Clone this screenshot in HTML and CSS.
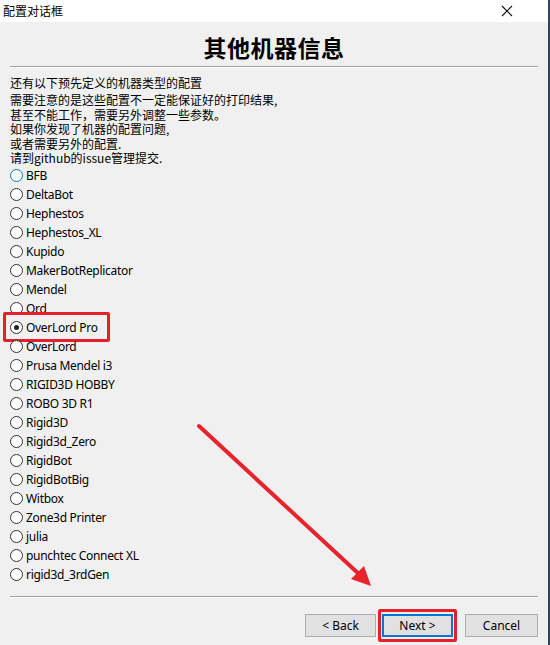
FILE: index.html
```html
<!DOCTYPE html>
<html lang="zh-CN">
<head>
    <meta charset="UTF-8" />
    <title>配置对话框</title>
    <link rel="stylesheet" href="styles.css">
</head>
<body>
    <div class="window">
        <div class="titlebar">
            <span class="caption">配置对话框</span>
            <svg class="close" width="12" height="12" viewBox="0 0 12 12">
                <path d="M1 1 L11 11 M11 1 L1 11" stroke="#111" stroke-width="1.1" fill="none" />
            </svg>
        </div>

        <div class="content">
            <h1 class="heading">其他机器信息</h1>
            <div class="rule"></div>

            <p class="intro">还有以下预先定义的机器类型的配置</p>
            <p class="note">需要注意的是这些配置不一定能保证好的打印结果,<br>
                甚至不能工作，需要另外调整一些参数。<br>
                如果你发现了机器的配置问题,<br>
                或者需要另外的配置.<br>
                请到github的issue管理提交.</p>

            <ul class="machines">
                <li class="machine hover"><span class="radio"></span>BFB</li>
                <li class="machine"><span class="radio"></span>DeltaBot</li>
                <li class="machine"><span class="radio"></span>Hephestos</li>
                <li class="machine"><span class="radio"></span>Hephestos_XL</li>
                <li class="machine"><span class="radio"></span>Kupido</li>
                <li class="machine"><span class="radio"></span>MakerBotReplicator</li>
                <li class="machine"><span class="radio"></span>Mendel</li>
                <li class="machine"><span class="radio"></span>Ord</li>
                <li class="machine checked marked"><span class="radio"></span>OverLord Pro</li>
                <li class="machine"><span class="radio"></span>OverLord</li>
                <li class="machine"><span class="radio"></span>Prusa Mendel i3</li>
                <li class="machine"><span class="radio"></span>RIGID3D HOBBY</li>
                <li class="machine"><span class="radio"></span>ROBO 3D R1</li>
                <li class="machine"><span class="radio"></span>Rigid3D</li>
                <li class="machine"><span class="radio"></span>Rigid3d_Zero</li>
                <li class="machine"><span class="radio"></span>RigidBot</li>
                <li class="machine"><span class="radio"></span>RigidBotBig</li>
                <li class="machine"><span class="radio"></span>Witbox</li>
                <li class="machine"><span class="radio"></span>Zone3d Printer</li>
                <li class="machine"><span class="radio"></span>julia</li>
                <li class="machine"><span class="radio"></span>punchtec Connect XL</li>
                <li class="machine"><span class="radio"></span>rigid3d_3rdGen</li>
            </ul>

            <div class="rule bottom"></div>

            <div class="buttons">
                <button class="btn">&lt; Back</button>
                <span class="mark-box"><button class="btn default">Next &gt;</button></span>
                <button class="btn cancel">Cancel</button>
            </div>
        </div>

        <svg class="arrow" width="548" height="645" viewBox="0 0 548 645">
            <line x1="199" y1="426" x2="360" y2="575" stroke="#e8232b" stroke-width="4" stroke-linecap="round" />
            <polygon points="371,586 351,579 364,566" fill="#e8232b" />
        </svg>
    </div>
</body>
</html>
```

FILE: styles.css
```css
:root {
    --bg: #f0f0f0;
    --text: #000;
    --rule: #a0a0a0;
    --mark: #e5202a;
    --focus: #0078d7;
}

body {
    margin: 0;
    width: 550px;
    height: 645px;
    overflow: hidden;
    background: var(--bg);
    font-family: "Noto Sans", "Noto Sans CJK SC", sans-serif;
    font-size: 12px;
    color: var(--text);
}

.window {
    position: relative;
    width: 548px;
    height: 645px;
    border-right: 2px solid #2e4560;
    background: var(--bg);
}

.titlebar {
    height: 22px;
    background: #fff;
    display: flex;
    align-items: center;
    justify-content: space-between;
    padding: 0 35px 0 3px;
}

.caption {
    font-family: "Noto Sans CJK SC", sans-serif;
    font-size: 12px;
    line-height: 22px;
}

.close {
    display: block;
    margin-top: -1px;
}

.content {
    padding: 0 10px;
}

.heading {
    margin: 0;
    padding-top: 10px;
    height: 34px;
    text-align: center;
    font-family: "Noto Sans CJK SC", sans-serif;
    font-size: 23px;
    line-height: 30px;
    font-weight: bold;
    letter-spacing: 0.5px;
}

.rule {
    height: 1px;
    background: var(--rule);
    border-bottom: 1px solid #fff;
    width: 528px;
}

.intro,
.note {
    margin: 0;
    font-family: "Noto Sans CJK SC", sans-serif;
    font-size: 12px;
}

.intro {
    margin-top: 8px;
    line-height: 14px;
}

.note {
    margin-top: 3px;
    line-height: 14.5px;
}

.machines {
    list-style: none;
    margin: 0;
    padding: 0;
}

.machine {
    position: relative;
    height: 19px;
    display: flex;
    align-items: center;
    gap: 3px;
    line-height: 19px;
    letter-spacing: -0.3px;
}

.radio {
    width: 11px;
    height: 11px;
    border: 1px solid #333;
    border-radius: 50%;
    background: #fff;
    position: relative;
    flex: none;
}

.hover .radio {
    border-color: var(--focus);
}

.checked .radio::after {
    content: "";
    position: absolute;
    left: 3px;
    top: 3px;
    width: 5px;
    height: 5px;
    border-radius: 50%;
    background: #222;
}

.marked::before {
    content: "";
    position: absolute;
    left: -7px;
    top: -6px;
    width: 101px;
    height: 24px;
    border: 3px solid var(--mark);
    border-radius: 2px;
}

.bottom {
    margin-top: 12px;
}

.buttons {
    display: flex;
    justify-content: flex-end;
    align-items: center;
    margin-top: 11px;
    width: 528px;
}

.btn {
    width: 71px;
    height: 23px;
    padding: 0;
    background: #e1e1e1;
    border: 1px solid #adadad;
    font-family: inherit;
    font-size: 12px;
    color: #000;
}

.mark-box {
    margin-left: 2px;
    padding: 2px 1px;
    border: 3px solid var(--mark);
    border-radius: 2px;
    display: flex;
}

.btn.default {
    border: 2px solid var(--focus);
}

.cancel {
    margin-left: 8px;
    width: 73px;
}

.arrow {
    position: absolute;
    left: 0;
    top: 0;
    pointer-events: none;
}
```
